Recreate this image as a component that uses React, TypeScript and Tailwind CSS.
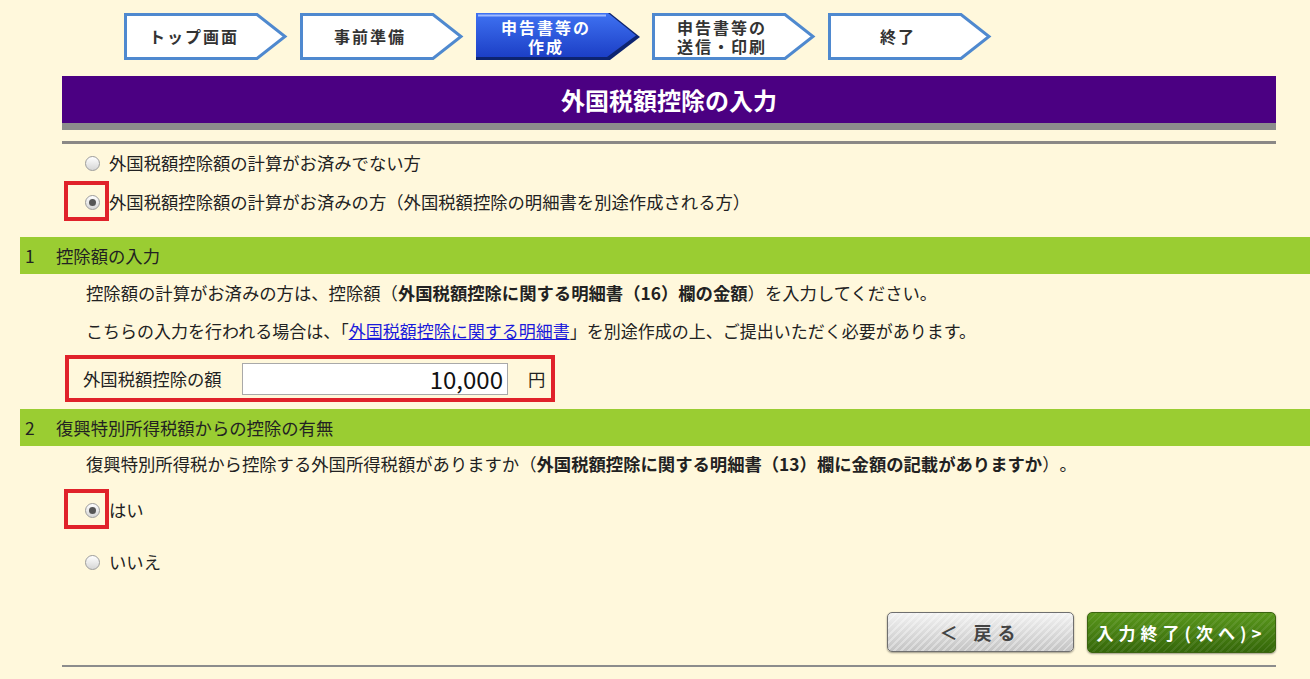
import React from "react";

const font = "font-['Noto_Sans_CJK_JP','Noto_Sans',sans-serif]";

type Step = { label: string[]; active?: boolean };

const steps: Step[] = [
  { label: ["トップ画面"] },
  { label: ["事前準備"] },
  { label: ["申告書等の", "作成"], active: true },
  { label: ["申告書等の", "送信・印刷"] },
  { label: ["終了"] },
];

const StepArrow = ({ step }: { step: Step }) => (
  <div className="relative h-[47px] w-[164px]">
    {step.active ? (
      <svg width="164" height="47" viewBox="0 0 164 47" className="absolute inset-0">
        <defs>
          <linearGradient id="stepActive" x1="0" y1="0" x2="0" y2="1">
            <stop offset="0" stopColor="#3f72f2" />
            <stop offset="1" stopColor="#1c3fc6" />
          </linearGradient>
        </defs>
        <polygon points="0,0 134,0 164,24 134,47 0,47" fill="#0d2470" />
        <polygon points="0,0 132,0 160,22.5 131,44 0,44" fill="url(#stepActive)" />
        <line x1="2" y1="2.5" x2="130" y2="2.5" stroke="#9fbaff" strokeWidth="2" />
      </svg>
    ) : (
      <svg width="164" height="47" viewBox="0 0 164 47" className="absolute inset-0">
        <polygon
          points="1.5,1.5 133,1.5 161,23.5 133,45.5 1.5,45.5"
          fill="#ffffff"
          stroke="#4f89cf"
          strokeWidth="3"
        />
      </svg>
    )}
    <div
      className={`absolute inset-y-0 left-0 flex w-[140px] items-center justify-center text-center text-[16px] font-bold leading-[19px] tracking-[2px] ${
        step.active ? "text-white" : "text-[#333]"
      }`}
    >
      <p>
        {step.label.map((l, i) => (
          <React.Fragment key={l}>
            {i > 0 && <br />}
            {l}
          </React.Fragment>
        ))}
      </p>
    </div>
  </div>
);

const Radio = ({ checked }: { checked?: boolean }) => (
  <span className="flex h-[15px] w-[15px] shrink-0 items-center justify-center rounded-full border border-[#9c9c9c] bg-gradient-to-b from-white to-[#d6d6d6]">
    {checked && <span className="h-[7px] w-[7px] rounded-full bg-[#555]" />}
  </span>
);

const RadioRow = ({
  label,
  checked,
  marked,
  className,
}: {
  label: string;
  checked?: boolean;
  marked?: boolean;
  className: string;
}) => (
  <div className={`flex items-center pl-[85px] ${className}`}>
    <span className="relative">
      <Radio checked={checked} />
      {marked && (
        <span className="absolute left-[-21px] top-[-14px] h-[40px] w-[45px] border-[4px] border-[#e0222a]" />
      )}
    </span>
    <span className="ml-[9px]">{label}</span>
  </div>
);

const SectionBar = ({ num, title }: { num: string; title: string }) => (
  <div className="ml-[20px] flex h-[37px] items-center bg-[#9acd32] pl-[5px]">
    <span className="w-[31px]">{num}</span>
    <span>{title}</span>
  </div>
);

export default function App() {
  return (
    <div
      className={`min-h-screen bg-[#fff8dc] pb-4 text-[17.33px] text-[#222] [text-spacing-trim:space-all] ${font}`}
    >
      <div className="flex gap-[12px] pl-[124px] pt-[13px]">
        {steps.map((s, i) => (
          <StepArrow key={i} step={s} />
        ))}
      </div>

      <div className="ml-[62px] mt-[16px] w-[1214px]">
        <div className="flex h-[47px] items-center justify-center bg-[#4b0082] text-[24px] font-bold text-white">
          外国税額控除の入力
        </div>
        <div className="h-[7px] bg-[#8c8c8c]" />
        <div className="mt-[11px] h-[3px] bg-[#8a8886]" />
      </div>

      <RadioRow className="h-[38px]" label="外国税額控除額の計算がお済みでない方" />
      <RadioRow
        className="h-[40px]"
        checked
        marked
        label="外国税額控除額の計算がお済みの方（外国税額控除の明細書を別途作成される方）"
      />

      <div className="mt-[15px]">
        <SectionBar num="1" title="控除額の入力" />
      </div>
      <div className="flex h-[38px] items-center pl-[86px]">
        <span>
          控除額の計算がお済みの方は、控除額（<b>外国税額控除に関する明細書（16）欄の金額</b>
          ）を入力してください。
        </span>
      </div>
      <div className="flex h-[37px] items-center pl-[86px] text-[17px] [text-spacing-trim:normal]">
        <span>
          こちらの入力を行われる場合は、「
          <a href="#" className="text-[#1a1adb] underline">
            外国税額控除に関する明細書
          </a>
          」を別途作成の上、ご提出いただく必要があります。
        </span>
      </div>
      <div className="ml-[65px] mt-[6px] flex h-[47px] w-[490px] items-center border-[4px] border-[#e0222a] pl-[14px]">
        <span className="w-[159px]">外国税額控除の額</span>
        <div className="flex h-[32px] w-[266px] items-center justify-end border border-[#a9a9a9] bg-white pr-[4px] text-[24px] text-[#111]">
          10,000
        </div>
        <span className="ml-[20px]">円</span>
      </div>

      <div className="mt-[7px]">
        <SectionBar num="2" title="復興特別所得税額からの控除の有無" />
      </div>
      <div className="flex h-[36px] items-center pl-[86px]">
        <span>
          復興特別所得税から控除する外国所得税額がありますか（
          <b>外国税額控除に関する明細書（13）欄に金額の記載がありますか</b>）。
        </span>
      </div>
      <RadioRow className="h-[56px]" checked marked label="はい" />
      <RadioRow className="h-[48px]" label="いいえ" />

      <div className="mt-[26px] flex w-[1276px] justify-end gap-[13px]">
        <button className="flex h-[40px] w-[187px] items-center justify-center rounded-[5px] border border-[#6f6f6f] bg-[image:repeating-linear-gradient(135deg,rgba(255,255,255,0.35)_0px,rgba(255,255,255,0.35)_2px,transparent_2px,transparent_5px),linear-gradient(#f2f2f2,#c4c4c4)] text-[18px] font-bold tracking-[6px] text-[#444] shadow-[0_1px_2px_rgba(0,0,0,0.4)]">
          ＜ 戻る
        </button>
        <button className="flex h-[41px] w-[189px] items-center justify-center rounded-[5px] border border-[#3b6410] bg-[image:repeating-linear-gradient(135deg,rgba(255,255,255,0.08)_0px,rgba(255,255,255,0.08)_2px,transparent_2px,transparent_5px),linear-gradient(#5a981c,#346609)] text-[17px] font-bold tracking-[5px] text-white shadow-[0_1px_2px_rgba(0,0,0,0.4)]">
          入力終了(次へ)&gt;
        </button>
      </div>
      <div className="ml-[62px] mt-[12px] h-[2px] w-[1214px] bg-[#8c8c8c]" />
    </div>
  );
}
